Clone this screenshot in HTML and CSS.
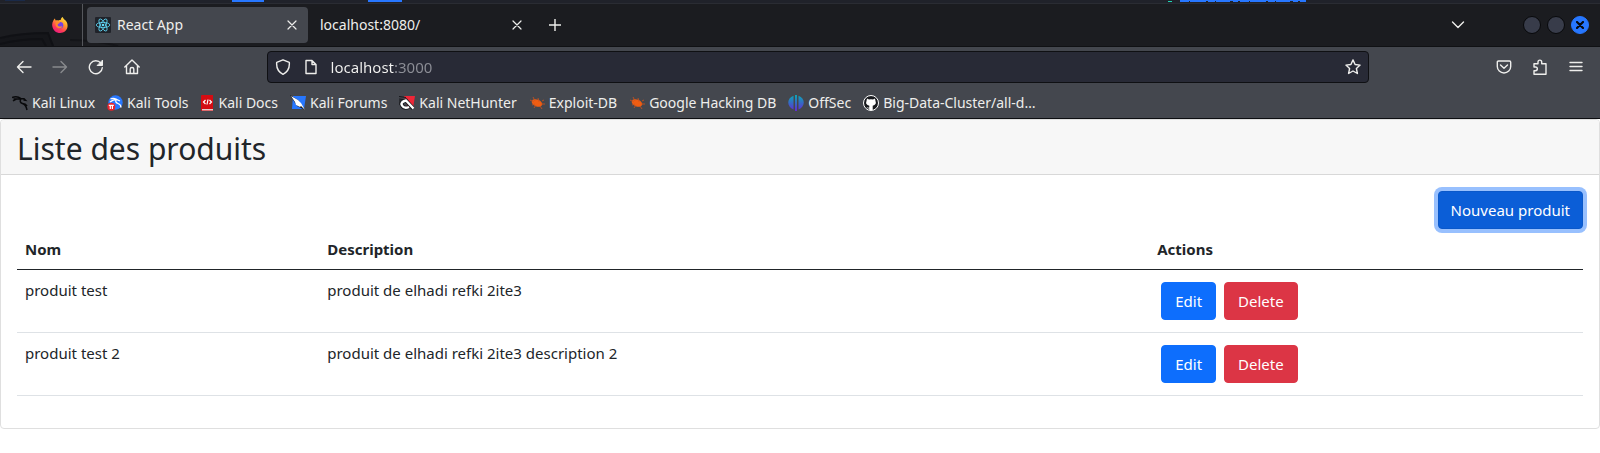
FILE: index.html
```
<!DOCTYPE html>
<html lang="fr">
<head>
<meta charset="utf-8">
<title>React App</title>
<link rel="stylesheet" href="styles.css">
</head>
<body>
<div class="desktop">
  <svg class="desktop-left" width="500" height="3" viewBox="0 0 500 3" aria-hidden="true"><path fill="#17305f" opacity=".6" d="M5 0h20v1H5z"/><path fill="#2777ff" d="M232 0h32v2h-32zM368 0h34v2h-34z"/></svg>
  <svg class="desktop-right" width="140" height="3" viewBox="0 0 140 3" aria-hidden="true"><path fill="#1fd6b4" d="M0 1h4v1H0z"/><path stroke="#2777ff" d="M12 .5h126"/><path stroke="#2777ff" stroke-dasharray="9 1 16 2 7 1 14 3 5 2" d="M12 1.5h126"/></svg>
</div>
<header class="browser">
  <div class="tabbar">
    <svg class="wallpaper" width="130" height="42" viewBox="0 0 130 42" fill="none" aria-hidden="true"><path fill="#15161a" d="M0 35Q20 29 48 29L54 42H0z"/><path stroke="#101115" stroke-width="2" d="M0 34Q20 29 48 29l5 13M0 40q20-5 42-5l4 7"/><path stroke="#141519" stroke-width="2" d="M70 36q25 0 48 6"/></svg>
    <button class="firefox" aria-label="Firefox View">
      <svg width="16" height="16" viewBox="0 0 16 16"><defs><linearGradient id="fx" x1=".8" y1="0" x2=".2" y2="1"><stop offset="0" stop-color="#ffe743"/><stop offset=".35" stop-color="#ffa22a"/><stop offset=".7" stop-color="#ff3b56"/><stop offset="1" stop-color="#e31587"/></linearGradient></defs><path fill="url(#fx)" d="M1.5 3.3C2 2.3 2.6 1.7 3 1.5c0 .8.3 1.5.7 2 .8-.3 1.7-.4 2.4 0C7 2.800 8 2.800 8.700 3 8.800 1.500 9.500.6 10.700 0c.3 2 2.800 2.800 4 5 1.500 3 1.200 7-1.600 9.300-3 2.400-7.600 2.200-10.400-.4C-.3 11-.6 6.500 1.500 3.300z"/><circle cx="8" cy="8.300" r="3.300" fill="#7542e5"/><path fill="#ff8a2b" d="M3.700 5.500c1.200-1.200 3-1.300 4.300-.1-.2.9-1.600 1-2.200 1.800-.4 1 .3 2 1.600 2.300 1.300.2 2.200-.6 3-.3-.6 1.600-2.400 2.500-4.200 2-2.200-.7-3.300-3.500-2.500-5.700z"/></svg>
    </button>
    <div class="tabs">
      <div class="tab tab-active">
        <svg width="16" height="16" viewBox="0 0 16 16"><rect width="16" height="16" rx="1" fill="#20232a"/><g fill="none" stroke="#61dafb" stroke-width=".8"><ellipse cx="8" cy="8" rx="6.800" ry="2.600"/><ellipse cx="8" cy="8" rx="6.800" ry="2.600" transform="rotate(60 8 8)"/><ellipse cx="8" cy="8" rx="6.800" ry="2.600" transform="rotate(120 8 8)"/></g><circle cx="8" cy="8" r="1.300" fill="#61dafb"/></svg>
        <span class="tab-title">React App</span>
        <button class="close" aria-label="Fermer React App"><svg width="10" height="10" viewBox="0 0 10 10"><path d="M1 1l8 8M9 1L1 9"/></svg></button>
      </div>
      <div class="tab">
        <span class="tab-title">localhost:8080/</span>
        <button class="close" aria-label="Fermer localhost"><svg width="10" height="10" viewBox="0 0 10 10"><path d="M1 1l8 8M9 1L1 9"/></svg></button>
      </div>
    </div>
    <button class="tool" aria-label="Nouvel onglet"><svg width="12" height="12" viewBox="0 0 12 12"><path d="M6 0v12M0 6h12"/></svg></button>
    <button class="tool all-tabs" aria-label="Tous les onglets"><svg width="14" height="8" viewBox="0 0 14 8"><path d="M1.500 1L7 6.500 12.500 1"/></svg></button>
    <div class="controls">
      <button class="dot" aria-label="Réduire"></button>
      <button class="dot" aria-label="Agrandir"></button>
      <button class="dot dot-close" aria-label="Fermer"><svg width="8" height="8" viewBox="0 0 8 8"><path d="M1 1l6 6M7 1L1 7"/></svg></button>
    </div>
  </div>
  <nav class="navbar">
    <button class="tool" aria-label="Retour"><svg width="16" height="16" viewBox="0 0 16 16"><path d="M15 8H1.500M7 2.500L1.500 8 7 13.500"/></svg></button>
    <button class="tool" disabled aria-label="Suivant"><svg width="16" height="16" viewBox="0 0 16 16"><path d="M1 8h13.500M9 2.500L14.500 8 9 13.500"/></svg></button>
    <button class="tool" aria-label="Actualiser"><svg width="16" height="16" viewBox="0 0 16 16"><path d="M14.300 8.700A6.500 6.500 0 1 1 13 4.300"/><path class="solid" d="M14.500 1.500v5H9.500z"/></svg></button>
    <button class="tool" aria-label="Accueil"><svg width="16" height="16" viewBox="0 0 16 16"><path d="M.8 8L8 1l7.200 7M2.500 6.500v8h11v-8M6.200 14.500V10q0-1.500 1.800-1.500T9.800 10v4.500"/></svg></button>
    <span class="spring"></span>
    <form class="urlbar">
      <svg width="16" height="16" viewBox="0 0 16 16"><path d="M8 .8l6.300 2.500c.5 5.500-1.500 9.500-6.300 12-4.800-2.500-6.800-6.500-6.300-12z"/></svg>
      <svg width="12" height="16" viewBox="0 0 12 16"><path d="M1 1.500h6l4 4v9H1zM7 1.500v4h4"/></svg>
      <input class="url" aria-label="Adresse" value="localhost:3000">
      <button class="star" type="button" aria-label="Marquer cette page"><svg width="16" height="16" viewBox="0 0 16 16"><path d="M8 .9l2.100 4.600 5 .6-3.700 3.400 1 5L8 12l-4.400 2.500 1-5L.9 6.100l5-.6z"/></svg></button>
    </form>
    <span class="spring"></span>
    <button class="tool" aria-label="Pocket"><svg width="16" height="16" viewBox="0 0 16 16"><path d="M2.500 2h11q1.200 0 1.200 1.200V7.500a6.700 6.500 0 0 1-13.400 0V3.200Q1.300 2 2.500 2zM4.500 6L8 9.300 11.500 6"/></svg></button>
    <button class="tool" aria-label="Extensions"><svg width="16" height="16" viewBox="0 0 16 16"><path d="M2 15.200v-3.500h1.500a1.800 1.800 0 0 0 0-3.700H2V4.800h4V3a1.800 1.800 0 0 1 3.700 0v1.800H14v10.400z"/></svg></button>
    <button class="tool" aria-label="Menu"><svg width="14" height="12" viewBox="0 0 14 12"><path d="M1 1.500h12M1 5.500h12M1 9.500h12"/></svg></button>
  </nav>
  <nav class="bookmarks">
    <a href="#"><svg width="16" height="16" viewBox="0 0 16 16"><path fill="none" stroke="#08090b" stroke-width="1.500" d="M0 2.500q5-2 9 1M1 6q4-3 8-2.500M1.500 4l7-.2M9 3.500l3 .3 1.500 1.500-2-.2M9 3.500q-2 4 1.500 5T15 15M10.500 8.500q3 0 4.500 2.500"/></svg>Kali Linux</a>
    <a href="#"><svg width="16" height="16" viewBox="0 0 16 16"><circle cx="8.500" cy="7.500" r="7.200" fill="#2777ff"/><path fill="none" stroke="#fff" stroke-width="1.300" d="M3.500 4q3-1.500 6 .5M3 7q3-2.500 6.500-2.500L13 6M9 5q-1 2.500 2 3.500t3 4"/><circle cx="4.300" cy="11.700" r="4" fill="#e8242c"/><path stroke="#fff" stroke-width="1.200" d="M1.800 10.300h5M3.300 10v4M5.400 10v4"/></svg>Kali Tools</a>
    <a href="#"><svg width="14" height="16" viewBox="0 0 14 16"><path fill="#d40c12" d="M1 0h11v16H1Q0 16 0 15V1Q0 0 1 0z"/><path fill="#e5c9c9" d="M1 14h11v1.500H1z"/><path fill="none" stroke="#fff" stroke-width="1.200" d="M4.500 5L2.500 7l2 2M8.500 5l2 2-2 2M7 4.500l-1 5"/></svg>Kali Docs</a>
    <a href="#"><svg width="16" height="16" viewBox="0 0 16 16"><path fill="#2777ff" d="M3 1h13l-2 13H2z"/><path fill="#15161a" d="M0 0l8 5 7 10-8-4z"/><path fill="#fff" d="M1 1l7 4 3 3 4 7-4-4-1 1-4-2-1-3z"/></svg>Kali Forums</a>
    <a href="#"><svg width="16" height="16" viewBox="0 0 16 16"><path fill="#ee2637" d="M5 1h11l-2 12H9z"/><path fill="none" stroke="#17181c" stroke-width="1.200" d="M0 1.500l7 1M0 4l4 .5M1 5v5"/><path fill="none" stroke="#17181c" stroke-width="4" d="M10 12Q5 14 3 10.500T7 5.500l7 8"/><path fill="none" stroke="#fff" stroke-width="2.400" d="M10 12Q5 14 3 10.500T7 5.500l7.500 8"/></svg>Kali NetHunter</a>
    <a href="#"><svg width="16" height="16" viewBox="0 0 16 16"><ellipse cx="8" cy="8" rx="5.500" ry="3.500" transform="rotate(22 8 8)" fill="#ef5d12"/><path stroke="#d2531a" stroke-width=".8" d="M1 5l4 2M4 2l2 4M9 3l1 4M13 6l2-1M12 9h4M3 10l3-1M5 13l2-3M11 11l2 3"/></svg>Exploit-DB</a>
    <a href="#"><svg width="16" height="16" viewBox="0 0 16 16"><ellipse cx="8" cy="8" rx="5.500" ry="3.500" transform="rotate(22 8 8)" fill="#ef5d12"/><path stroke="#d2531a" stroke-width=".8" d="M1 5l4 2M4 2l2 4M9 3l1 4M13 6l2-1M12 9h4M3 10l3-1M5 13l2-3M11 11l2 3"/></svg>Google Hacking DB</a>
    <a href="#"><svg width="16" height="16" viewBox="0 0 16 16"><defs><linearGradient id="os" x2="0" y2="1"><stop stop-color="#0aa9b5"/><stop offset="1" stop-color="#6328d6"/></linearGradient></defs><path fill="url(#os)" d="M5.500.7v13.800C-1.500 12-1.500 3 5.500.7zM7 0h2v16H7zM10.500.7c7 2.300 7 11.300 0 13.800z"/></svg>OffSec</a>
    <a href="#"><svg width="16" height="16" viewBox="0 0 16 16"><circle cx="8" cy="8" r="7.500" fill="#181a1e" stroke="#fff"/><path fill="#fff" d="M4 3.500l2 1q2-.5 4 0l2-1 .4 2q1.500 4.500-2.700 5.200V15H6.300v-1.500Q4.500 14 3.500 12q1.500 1 2.800.5v-1.800Q2 10 3.600 5.500z"/></svg>Big-Data-Cluster/all-d…</a>
  </nav>
</header>
<main class="card">
  <div class="card-header"><h2>Liste des produits</h2></div>
  <div class="card-body">
    <div class="actions"><button class="btn btn-primary btn-focus">Nouveau produit</button></div>
    <table class="table">
      <colgroup><col class="col-name"><col class="col-desc"><col></colgroup>
      <thead><tr><th scope="col">Nom</th><th scope="col">Description</th><th scope="col">Actions</th></tr></thead>
      <tbody>
        <tr><td>produit test</td><td>produit de elhadi refki 2ite3</td><td><div class="row-actions"><button class="btn btn-primary">Edit</button><button class="btn btn-danger">Delete</button></div></td></tr>
        <tr><td>produit test 2</td><td>produit de elhadi refki 2ite3 description 2</td><td><div class="row-actions"><button class="btn btn-primary">Edit</button><button class="btn btn-danger">Delete</button></div></td></tr>
      </tbody>
    </table>
  </div>
</main>
</body>
</html>
```
FILE: styles.css
```
* { box-sizing: border-box; }
body { margin: 0; background: #fff; color: #212529; font: 15px/24px "Noto Sans", sans-serif; }
button { font: inherit; color: inherit; margin: 0; padding: 0; border: 0; background: none; }
svg { display: block; flex: none; }

.desktop { display: flex; justify-content: space-between; height: 3px; padding-right: 292px; background: #20222a; overflow: hidden; }

.browser { background: #44474e; color: #eeeeec; font-size: 14px; line-height: 20px; border-bottom: 1px solid #0d0e11; }
.browser button svg, .urlbar svg { fill: none; stroke: #eeeeec; stroke-width: 1.4; stroke-linecap: round; stroke-linejoin: round; }
.browser .firefox svg { stroke: none; }
.browser .solid { fill: #eeeeec; stroke-width: 1; }

.tabbar { position: relative; display: flex; align-items: center; height: 44px; padding-right: 11px; background: #1b1c20; border-top: 1px solid #2a2c33; border-bottom: 1px solid #101114; }
.wallpaper { position: absolute; left: 0; bottom: 0; }
.firefox { position: relative; display: flex; align-self: stretch; align-items: center; width: 83px; padding-left: 52px; border-right: 1px solid #55575c; }
.tabs { position: relative; display: flex; gap: 4px; padding: 0 4px; }
.tab { display: flex; align-items: center; gap: 6px; width: 221px; height: 36px; padding: 0 11px 0 8px; border-radius: 4px; }
.tab-active { background: #44474e; }
.tab-title { flex: 1; }
.browser .close svg { stroke-width: 1.2; }
.tool { display: flex; align-items: center; justify-content: center; width: 36px; height: 32px; }
.tool:disabled { opacity: .4; }
.all-tabs { margin-left: auto; }
.controls { display: flex; gap: 6px; padding-left: 47px; }
.dot { display: flex; align-items: center; justify-content: center; width: 18px; height: 18px; border: 1px solid #08090b; border-radius: 50%; background: #383c4a; }
.dot-close { border-color: #2777ff; background: #2777ff; }
.browser .dot-close svg { stroke: #08090b; stroke-width: 2.2; }

.navbar { display: flex; align-items: center; height: 40px; padding: 0 6px; }
.spring { flex: 5; }
.urlbar { flex: 47; display: flex; align-items: center; gap: 14px; height: 32px; margin: 0 1px; padding: 0 7px; border: 1px solid #0f1013; border-radius: 4px; background: #282a36; }
.url { flex: 1; min-width: 0; padding: 0; border: 0; outline: 0; font: inherit; font-size: 15px; color: transparent; background: linear-gradient(90deg, #f4f4f2 64px, #8d8f97 64px); background-clip: text; }

.bookmarks { display: flex; align-items: center; gap: 12px; height: 31px; padding: 0 12px; }
.bookmarks a { display: flex; align-items: center; gap: 4px; color: inherit; text-decoration: none; white-space: nowrap; }

.card { border: 1px solid #dfdfdf; border-radius: 4px; }
.card-header { padding: 10px 16px 6px; background: #f7f7f7; border-bottom: 1px solid #d8d8d8; border-radius: 3px 3px 0 0; }
h2 { margin: 0; font-size: 30px; line-height: 38px; font-weight: 400; }
.card-body { padding: 16px; }
.actions { display: flex; justify-content: flex-end; }
.btn { padding: 6px 12px; border: 1px solid; border-radius: 4px; line-height: 24px; color: #fff; }
.btn-primary { background: #0d6efd; border-color: #0d6efd; }
.btn-danger { background: #dc3545; border-color: #dc3545; }
.btn-focus { background: #0b5ed7; border-color: #0a58ca; box-shadow: 0 0 0 4px #98c0fe; }
.table { width: 100%; margin-bottom: 16px; border-collapse: collapse; table-layout: fixed; }
.col-name { width: 19.3%; }
.col-desc { width: 53%; }
th, td { padding: 8px; text-align: left; vertical-align: top; border-bottom: 1px solid #dee2e6; }
th { border-bottom-color: #212529; }
.row-actions { display: flex; gap: 8px; padding: 4px; }
.row-actions .btn { padding: 6px 13px; }
```
